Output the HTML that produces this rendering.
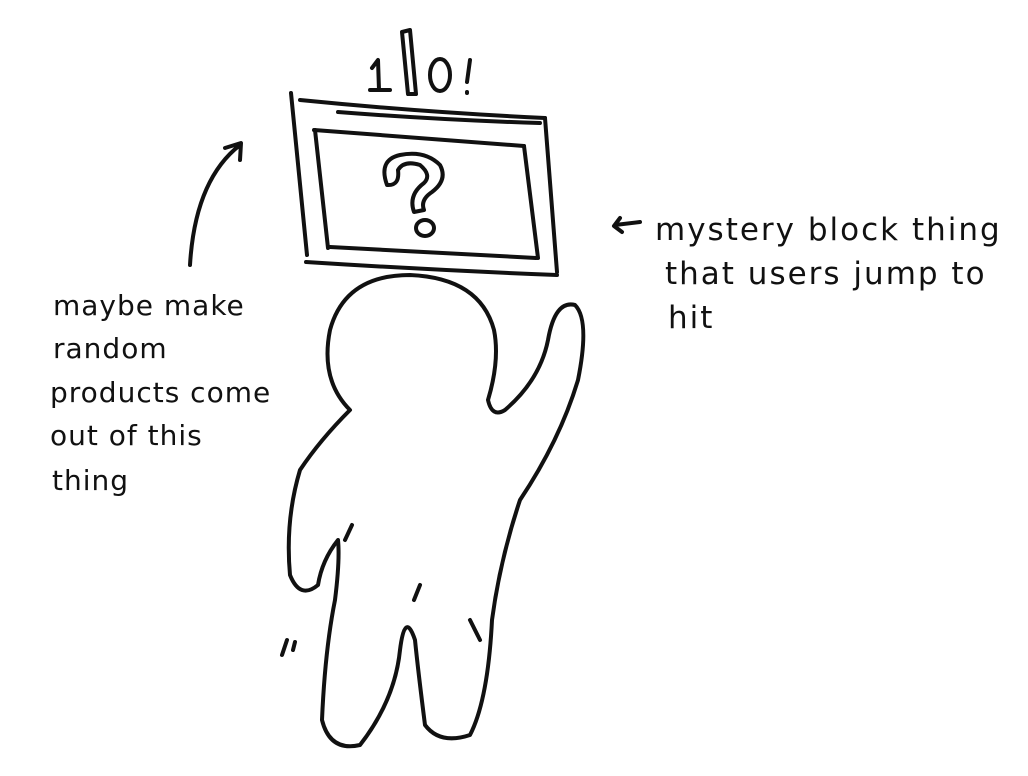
<!DOCTYPE html>
<html><head><meta charset="utf-8"><style>
html,body{margin:0;padding:0;background:#fff;width:1028px;height:776px;overflow:hidden}
svg{display:block}
text{font-family:"DejaVu Sans","Liberation Sans",sans-serif;fill:#111;font-size:27px}
.r{font-size:31px;letter-spacing:2px}
.l{font-size:28px;letter-spacing:1px}
</style></head><body>
<svg width="1028" height="776" viewBox="0 0 1028 776" xmlns="http://www.w3.org/2000/svg">
<g fill="none" stroke="#111" stroke-width="4" stroke-linecap="round" stroke-linejoin="round">
<path d="M291 93 L307 255"/>
<path d="M300 100 Q420 112 545 118"/>
<path d="M338 112 Q440 120 540 123"/>
<path d="M545 118 L557 272"/>
<path d="M306 262 Q430 270 557 275"/>
<path d="M314 130 Q420 138 524 146"/>
<path d="M315 130 L328 248"/>
<path d="M330 247 Q430 252 536 258"/>
<path d="M524 146 L538 258"/>
<path d="M387 185 Q378 160 400 155 Q425 150 440 165 Q448 180 432 192 Q420 200 424 210 L414 212 Q408 195 424 183 Q432 175 420 165 Q404 160 398 170 Q400 186 387 185 Z"/>
<ellipse cx="425" cy="228" rx="9" ry="8"/>
<path d="M372 68 L378 60 L379 90 M370 90 L390 90"/>
<path d="M402 32 L410 30 L416 94 L408 94 Z"/>
<ellipse cx="440" cy="75" rx="10" ry="16"/>
<path d="M470 60 L467 82 M467 92 L467 93"/>
<path d="M350 410 Q320 380 330 330 Q345 275 410 275 Q480 278 494 330 Q500 360 488 400 Q492 418 505 410 Q540 380 548 340 Q555 300 575 305 Q590 320 578 380 Q560 440 520 500 Q500 560 492 620 Q488 700 470 735 Q440 745 425 725 Q418 670 415 640 Q405 610 400 650 Q395 700 360 745 Q330 752 322 720 Q325 650 335 600 Q340 560 338 540 Q322 560 318 585 Q300 600 290 575 Q285 520 300 470 Q320 440 350 410"/>
<path d="M345 540 L352 525"/>
<path d="M414 600 L420 585"/>
<path d="M470 620 L480 640"/>
<path d="M190 265 Q195 180 240 145 M225 148 L241 143 L240 160"/>
<path d="M615 225 L640 222 M620 218 L614 226 L622 232"/>
<path d="M282 655 L287 640 M293 650 L295 642"/>
</g>
<text class="r" x="655" y="240">mystery block thing</text>
<text class="r" x="665" y="284">that users jump to</text>
<text class="r" x="668" y="328">hit</text>
<text class="l" x="53" y="315">maybe make</text>
<text class="l" x="53" y="358">random</text>
<text class="l" x="50" y="402">products come</text>
<text class="l" x="50" y="445">out of this</text>
<text class="l" x="52" y="490">thing</text>
</svg>
</body></html>
